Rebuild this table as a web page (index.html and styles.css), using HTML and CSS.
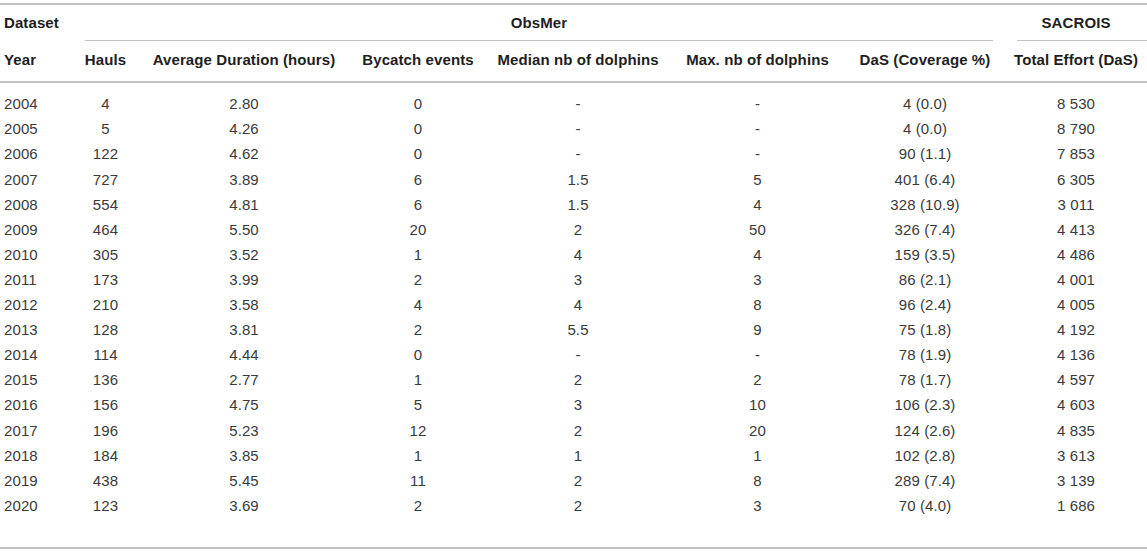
FILE: index.html
```html
<!DOCTYPE html>
<html lang="en">
<head>
    <meta charset="UTF-8">
    <meta name="viewport" content="width=device-width, initial-scale=1.0">
    <title>ObsMer bycatch table</title>
    <link rel="stylesheet" href="styles.css">
</head>
<body>
    <table class="data-table">
        <colgroup>
            <col class="c-year">
            <col class="c-hauls">
            <col class="c-duration">
            <col class="c-bycatch">
            <col class="c-median">
            <col class="c-max">
            <col class="c-das">
            <col class="c-effort">
        </colgroup>
        <thead>
            <tr class="group-row">
                <th class="first"><div class="group-label">Dataset</div></th>
                <th colspan="6"><div class="group-label ruled obsmer">ObsMer</div></th>
                <th><div class="group-label ruled sacrois">SACROIS</div></th>
            </tr>
            <tr class="col-row">
                <th class="first">Year</th>
                <th>Hauls</th>
                <th>Average Duration (hours)</th>
                <th>Bycatch events</th>
                <th>Median nb of dolphins</th>
                <th>Max. nb of dolphins</th>
                <th>DaS (Coverage %)</th>
                <th>Total Effort (DaS)</th>
            </tr>
        </thead>
        <tbody>
            <tr><td class="first">2004</td><td>4</td><td>2.80</td><td>0</td><td>-</td><td>-</td><td>4 (0.0)</td><td>8 530</td></tr>
            <tr><td class="first">2005</td><td>5</td><td>4.26</td><td>0</td><td>-</td><td>-</td><td>4 (0.0)</td><td>8 790</td></tr>
            <tr><td class="first">2006</td><td>122</td><td>4.62</td><td>0</td><td>-</td><td>-</td><td>90 (1.1)</td><td>7 853</td></tr>
            <tr><td class="first">2007</td><td>727</td><td>3.89</td><td>6</td><td>1.5</td><td>5</td><td>401 (6.4)</td><td>6 305</td></tr>
            <tr><td class="first">2008</td><td>554</td><td>4.81</td><td>6</td><td>1.5</td><td>4</td><td>328 (10.9)</td><td>3 011</td></tr>
            <tr><td class="first">2009</td><td>464</td><td>5.50</td><td>20</td><td>2</td><td>50</td><td>326 (7.4)</td><td>4 413</td></tr>
            <tr><td class="first">2010</td><td>305</td><td>3.52</td><td>1</td><td>4</td><td>4</td><td>159 (3.5)</td><td>4 486</td></tr>
            <tr><td class="first">2011</td><td>173</td><td>3.99</td><td>2</td><td>3</td><td>3</td><td>86 (2.1)</td><td>4 001</td></tr>
            <tr><td class="first">2012</td><td>210</td><td>3.58</td><td>4</td><td>4</td><td>8</td><td>96 (2.4)</td><td>4 005</td></tr>
            <tr><td class="first">2013</td><td>128</td><td>3.81</td><td>2</td><td>5.5</td><td>9</td><td>75 (1.8)</td><td>4 192</td></tr>
            <tr><td class="first">2014</td><td>114</td><td>4.44</td><td>0</td><td>-</td><td>-</td><td>78 (1.9)</td><td>4 136</td></tr>
            <tr><td class="first">2015</td><td>136</td><td>2.77</td><td>1</td><td>2</td><td>2</td><td>78 (1.7)</td><td>4 597</td></tr>
            <tr><td class="first">2016</td><td>156</td><td>4.75</td><td>5</td><td>3</td><td>10</td><td>106 (2.3)</td><td>4 603</td></tr>
            <tr><td class="first">2017</td><td>196</td><td>5.23</td><td>12</td><td>2</td><td>20</td><td>124 (2.6)</td><td>4 835</td></tr>
            <tr><td class="first">2018</td><td>184</td><td>3.85</td><td>1</td><td>1</td><td>1</td><td>102 (2.8)</td><td>3 613</td></tr>
            <tr><td class="first">2019</td><td>438</td><td>5.45</td><td>11</td><td>2</td><td>8</td><td>289 (7.4)</td><td>3 139</td></tr>
            <tr><td class="first">2020</td><td>123</td><td>3.69</td><td>2</td><td>2</td><td>3</td><td>70 (4.0)</td><td>1 686</td></tr>
        </tbody>
    </table>
</body>
</html>
```

FILE: styles.css
```css
:root {
    --rule: #c2c2c2;
    --head-text: #1e1e1e;
    --body-text: #3a3a3a;
}

* {
    box-sizing: border-box;
    margin: 0;
}

body {
    font-family: "Liberation Sans", Arial, sans-serif;
    font-size: 15px;
    line-height: 18px;
    letter-spacing: 0.1px;
    background: white;
    color: var(--body-text);
    padding-top: 3px;
}

/* table frame */
.data-table {
    width: 1147px;
    table-layout: fixed;
    border-collapse: collapse;
    border-top: 2px solid var(--rule);
    border-bottom: 2px solid var(--rule);
}

.c-year { width: 73px; }
.c-hauls { width: 65px; }
.c-duration { width: 212px; }
.c-bycatch { width: 136px; }
.c-median { width: 184px; }
.c-max { width: 175px; }
.c-das { width: 160px; }
.c-effort { width: 142px; }

th, td {
    padding: 0;
    text-align: center;
    white-space: nowrap;
}

th {
    font-weight: bold;
    color: var(--head-text);
}

.first {
    text-align: left;
    padding-left: 4px;
}

/* group headers */
.group-row th {
    vertical-align: top;
}

.group-label {
    padding: 9px 0 8px;
}

.group-label.ruled {
    border-bottom: 1px solid var(--rule);
}

.obsmer {
    margin: 0 12px;
}

.sacrois {
    margin-left: 12px;
    text-indent: -12px;
}

/* column headers */
.col-row th {
    padding-top: 10px;
    padding-bottom: 12px;
    border-bottom: 2px solid var(--rule);
}

.col-row th.first {
    padding-left: 4px;
}

/* body rows */
tbody td {
    padding-top: 3.55px;
    padding-bottom: 3.55px;
}

tbody td.first {
    padding-left: 4px;
}

tbody tr:first-child td {
    padding-top: 12.3px;
}

tbody tr:last-child td {
    padding-bottom: 32px;
}
```
